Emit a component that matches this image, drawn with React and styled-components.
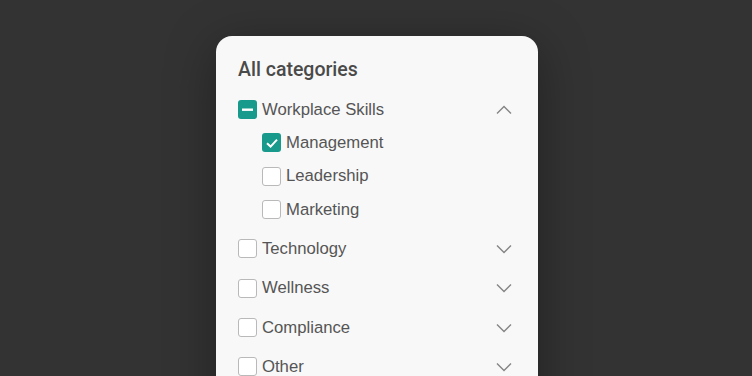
import styled, { createGlobalStyle } from "styled-components";

const GlobalStyle = createGlobalStyle`
  html, body {
    margin: 0;
    height: 376px;
    overflow: hidden;
    background: #333333;
  }
`;

const Page = styled.div`
  display: flex;
  padding: 36px 0 0 216px;
  font-family: "Liberation Sans", Arial, sans-serif;
`;

const Card = styled.div`
  width: 322px;
  height: 400px;
  box-sizing: border-box;
  padding: 22px 26px 0 22px;
  background: #f8f8f8;
  border-radius: 16px;
  box-shadow: 0 10px 50px rgba(0, 0, 0, 0.35);
`;

const Title = styled.h3`
  margin: 0 0 11px 0;
  font-family: Roboto, "Liberation Sans", sans-serif;
  font-size: 19.5px;
  line-height: 24px;
  font-weight: 500;
  color: #4a4a4a;
`;

const List = styled.div`
  display: flex;
  flex-direction: column;
  gap: 6px;
`;

const Group = styled.div`
  display: flex;
  flex-direction: column;
`;

const Row = styled.div`
  display: flex;
  align-items: center;
  height: 33.33px;
  padding-left: ${(p) => (p.$sub ? "24px" : "0")};
  cursor: pointer;
`;

const Box = styled.span`
  flex: none;
  width: 19px;
  height: 19px;
  box-sizing: border-box;
  border-radius: 3px;
  display: flex;
  align-items: center;
  justify-content: center;
  background: ${(p) => (p.$state === "off" ? "#ffffff" : "#17998b")};
  border: ${(p) => (p.$state === "off" ? "1px solid #b9b9b9" : "none")};
`;

const Label = styled.span`
  margin-left: 5px;
  font-size: 16.7px;
  color: #555555;
  flex: 1;
`;

const Chevron = ({ up }) => (
  <svg width="16" height="10" viewBox="0 0 16 10" fill="none">
    <polyline
      points={up ? "1,8.5 8,1.5 15,8.5" : "1,1.5 8,8.5 15,1.5"}
      stroke="#858585"
      strokeWidth="1.4"
    />
  </svg>
);

const Mark = ({ state }) => {
  if (state === "mixed")
    return (
      <svg width="13" height="13" viewBox="0 0 13 13">
        <rect x="1" y="5.5" width="11" height="2.4" fill="#fff" />
      </svg>
    );
  if (state === "on")
    return (
      <svg width="14" height="14" viewBox="0 0 14 14" fill="none">
        <polyline points="2,7.2 5.6,10.6 12,3.6" stroke="#fff" strokeWidth="2" />
      </svg>
    );
  return null;
};

const Check = ({ state = "off" }) => (
  <Box $state={state}>
    <Mark state={state} />
  </Box>
);

const groups = [
  {
    name: "Workplace Skills",
    state: "mixed",
    open: true,
    items: [
      { name: "Management", state: "on" },
      { name: "Leadership", state: "off" },
      { name: "Marketing", state: "off" },
    ],
  },
  { name: "Technology", state: "off" },
  { name: "Wellness", state: "off" },
  { name: "Compliance", state: "off" },
  { name: "Other", state: "off" },
];

export default function App() {
  return (
    <Page>
      <GlobalStyle />
      <Card>
        <Title>All categories</Title>
        <List>
          {groups.map((g) => (
            <Group key={g.name}>
              <Row>
                <Check state={g.state} />
                <Label>{g.name}</Label>
                <Chevron up={g.open} />
              </Row>
              {g.open &&
                g.items.map((it) => (
                  <Row $sub key={it.name}>
                    <Check state={it.state} />
                    <Label>{it.name}</Label>
                  </Row>
                ))}
            </Group>
          ))}
        </List>
      </Card>
    </Page>
  );
}
